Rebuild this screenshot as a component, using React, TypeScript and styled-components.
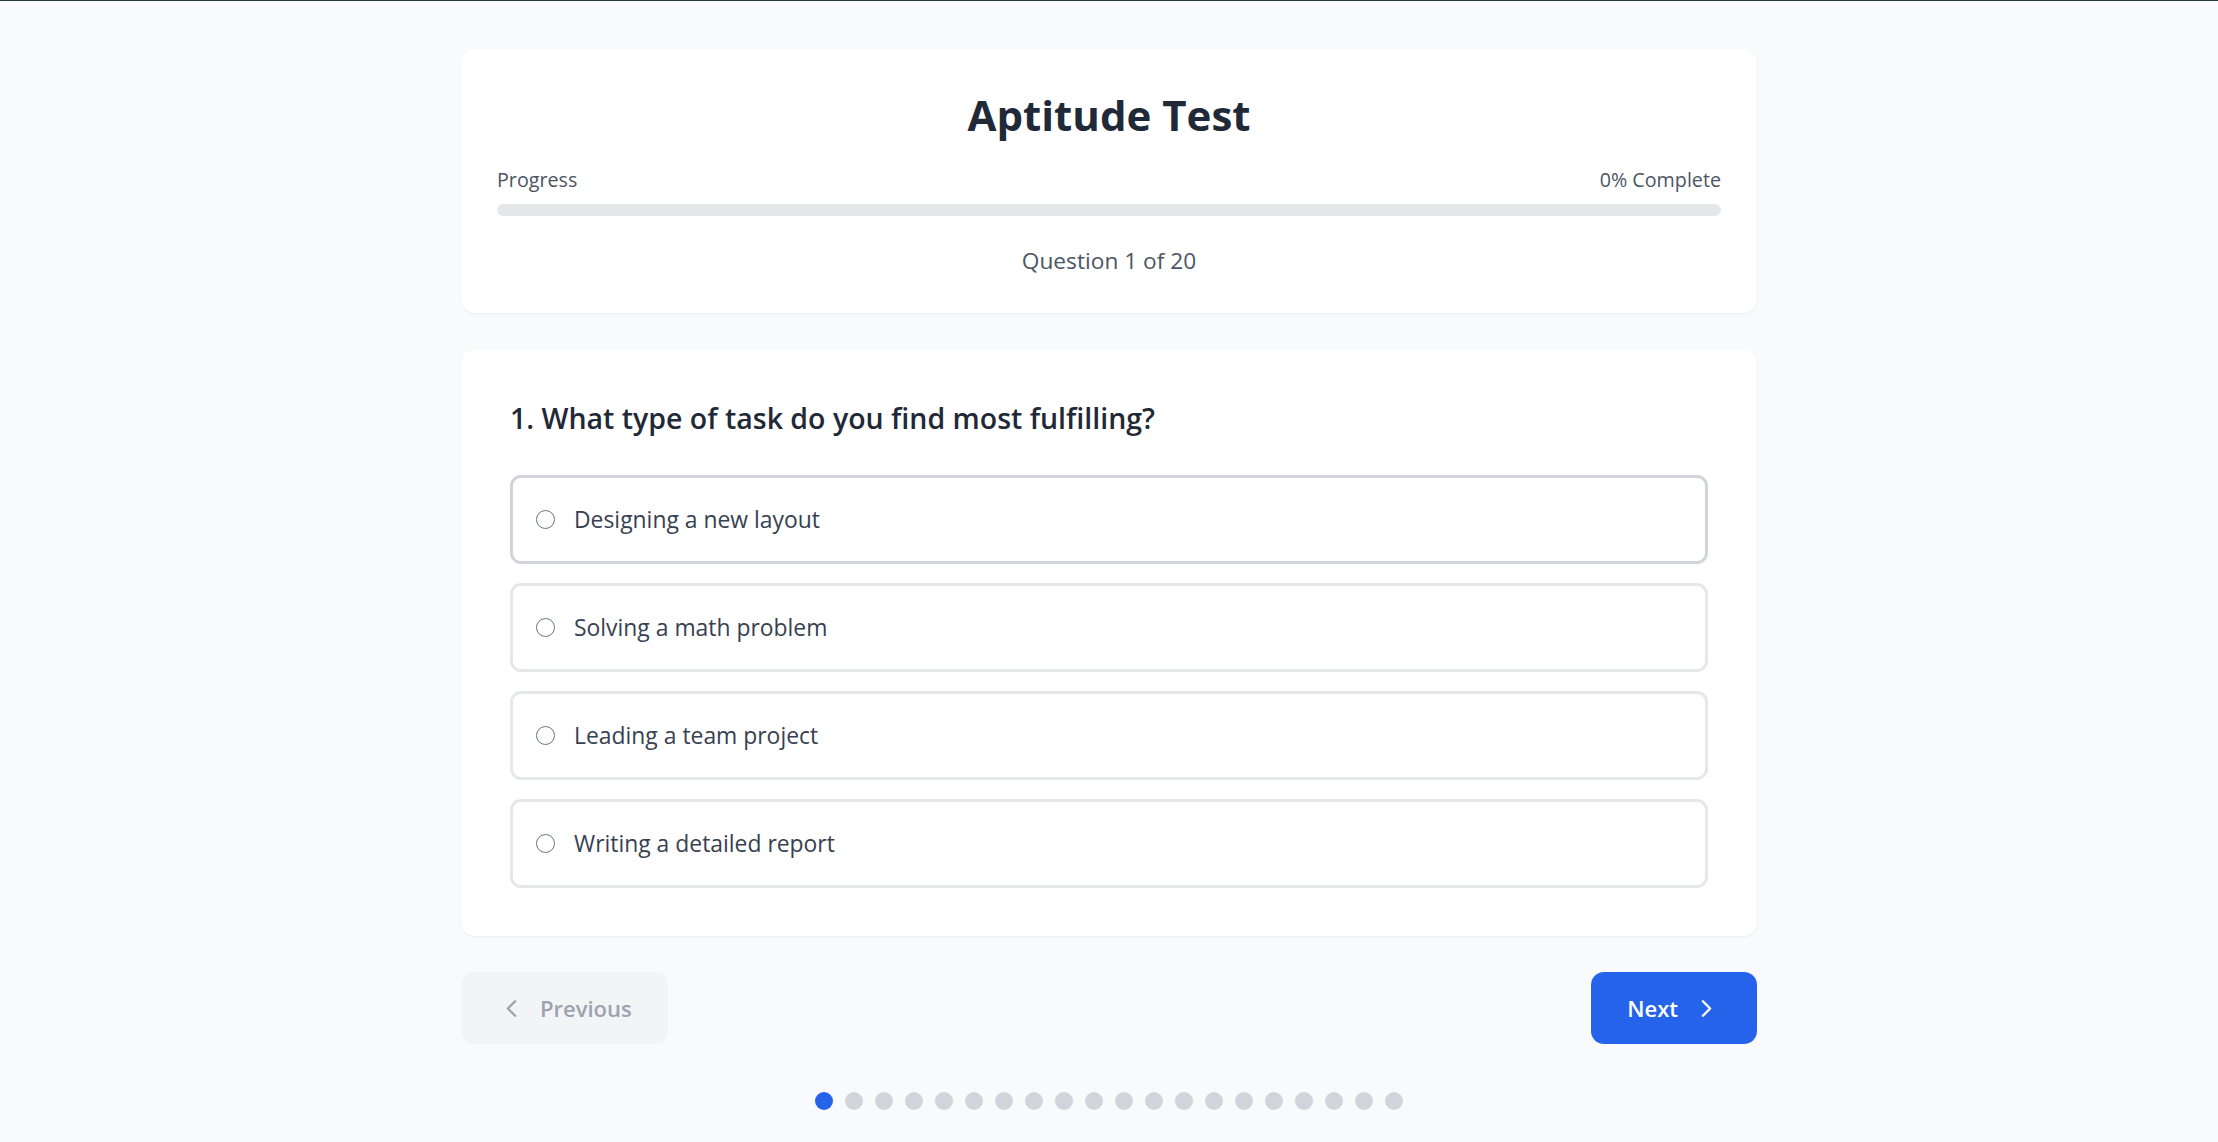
import React from "react";
import styled, { createGlobalStyle } from "styled-components";

const GlobalStyle = createGlobalStyle`
  html, body {
    margin: 0;
    padding: 0;
    background: #f9fafb;
  }
  body {
    border-top: 1px solid #22393a;
    font-family: "Open Sans", "Noto Sans", "Liberation Sans", sans-serif;
    color: #1f2937;
  }
  * { box-sizing: border-box; }
`;

const Page = styled.main`
  width: 1296px;
  margin: 0 auto;
  padding: 48px 0 40px;
  display: flex;
  flex-direction: column;
`;

const Card = styled.section<{ $pad: number }>`
  background: #ffffff;
  border-radius: 14px;
  box-shadow: 0 1px 3px rgba(0, 0, 0, 0.04), 0 1px 2px rgba(0, 0, 0, 0.03);
  padding: ${(p) => p.$pad}px;
`;

const HeaderCard = styled(Card)`
  padding-top: 38px;
  padding-bottom: 36px;
  display: flex;
  flex-direction: column;
`;

const Title = styled.h1`
  margin: 0 0 23px;
  text-align: center;
  font-size: 42px;
  line-height: 56px;
  font-weight: 700;
  color: #1f2937;
`;

const ProgressLabels = styled.div`
  display: flex;
  justify-content: space-between;
  font-size: 19.7px;
  line-height: 28px;
  color: #4b5563;
  margin-bottom: 10px;
`;

const Track = styled.div`
  height: 12px;
  border-radius: 6px;
  background: #e5e7eb;
  overflow: hidden;
`;

const Fill = styled.div`
  height: 100%;
  background: #2563eb;
  border-radius: 6px;
`;

const Counter = styled.p`
  margin: 29px 0 0;
  text-align: center;
  font-size: 22.7px;
  line-height: 32px;
  color: #4b5563;
`;

const QuestionCard = styled(Card)`
  margin-top: 36px;
  padding-bottom: 48px;
  display: flex;
  flex-direction: column;
`;

const Heading = styled.h2`
  margin: 0 0 37px;
  font-size: 28.5px;
  line-height: 40px;
  font-weight: 600;
  color: #1f2937;
`;

const Options = styled.div`
  display: flex;
  flex-direction: column;
  gap: 19px;
`;

const Option = styled.label<{ $hover?: boolean }>`
  height: 89px;
  display: flex;
  align-items: center;
  gap: 19px;
  padding: 0 23px;
  border: 3px solid ${(p) => (p.$hover ? "#d1d5db" : "#e5e7eb")};
  border-radius: 11px;
  background: #ffffff;
  cursor: pointer;
  font-size: 22.9px;
  color: #374151;
`;

const Radio = styled.span`
  width: 19px;
  height: 19px;
  border-radius: 50%;
  border: 1.5px solid #6b7280;
  background: #ffffff;
  flex-shrink: 0;
`;

const Nav = styled.div`
  margin-top: 36px;
  display: flex;
  justify-content: space-between;
  align-items: center;
`;

const NavButton = styled.button<{ $primary?: boolean }>`
  height: 72px;
  display: inline-flex;
  align-items: center;
  gap: 14px;
  padding: 0 36px;
  border: none;
  border-radius: 13px;
  font-family: inherit;
  font-size: 22px;
  font-weight: 600;
  background: ${(p) => (p.$primary ? "#2563eb" : "#f3f4f6")};
  color: ${(p) => (p.$primary ? "#ffffff" : "#9ca3af")};
  cursor: ${(p) => (p.$primary ? "pointer" : "not-allowed")};
`;

const Dots = styled.div`
  margin-top: 48px;
  display: flex;
  justify-content: center;
  gap: 12px;
`;

const Dot = styled.span<{ $active?: boolean }>`
  width: 18px;
  height: 18px;
  border-radius: 50%;
  background: ${(p) => (p.$active ? "#2563eb" : "#d1d5db")};
`;

const Chevron = ({ dir }: { dir: "left" | "right" }) => (
  <svg
    width="29"
    height="29"
    viewBox="0 0 24 24"
    fill="none"
    stroke="currentColor"
    strokeWidth="2"
    strokeLinecap="round"
    strokeLinejoin="round"
  >
    <path d={dir === "left" ? "m15 18-6-6 6-6" : "m9 18 6-6-6-6"} />
  </svg>
);

const options = [
  "Designing a new layout",
  "Solving a math problem",
  "Leading a team project",
  "Writing a detailed report",
];

export default function App() {
  const progress = 0;
  return (
    <>
      <GlobalStyle />
      <Page>
        <HeaderCard $pad={36}>
          <Title>Aptitude Test</Title>
          <ProgressLabels>
            <span>Progress</span>
            <span>{progress}% Complete</span>
          </ProgressLabels>
          <Track>
            <Fill style={{ width: `${progress}%` }} />
          </Track>
          <Counter>Question 1 of 20</Counter>
        </HeaderCard>

        <QuestionCard $pad={49}>
          <Heading>1. What type of task do you find most fulfilling?</Heading>
          <Options>
            {options.map((o, i) => (
              <Option key={o} $hover={i === 0}>
                <Radio />
                <span>{o}</span>
              </Option>
            ))}
          </Options>
        </QuestionCard>

        <Nav>
          <NavButton disabled>
            <Chevron dir="left" />
            Previous
          </NavButton>
          <NavButton $primary>
            Next
            <Chevron dir="right" />
          </NavButton>
        </Nav>

        <Dots>
          {Array.from({ length: 20 }).map((_, i) => (
            <Dot key={i} $active={i === 0} />
          ))}
        </Dots>
      </Page>
    </>
  );
}
